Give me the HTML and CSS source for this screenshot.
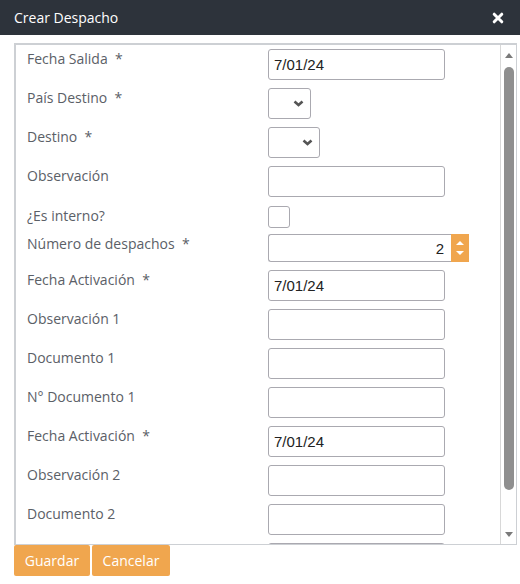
FILE: index.html
```html
<!DOCTYPE html>
<html lang="es">
<head>
<meta charset="utf-8">
<title>Crear Despacho</title>
<link rel="stylesheet" href="styles.css">
</head>
<body>
<header class="dlg-head">
  <span class="dlg-title">Crear Despacho</span>
  <svg class="dlg-close" width="12" height="12" viewBox="0 0 12 12" aria-hidden="true"><path d="M2.2 2.2 L9.8 9.8 M9.8 2.2 L2.2 9.8" stroke="#fff" stroke-width="3" stroke-linecap="round"/></svg>
</header>
<main class="dlg-body">
  <div class="panel">
    <div class="form">
      <div class="row"><label class="lbl">Fecha Salida &nbsp;*</label><input class="txt" type="text" value="7/01/24"></div>
      <div class="row"><label class="lbl">País Destino &nbsp;*</label><div class="sel sel-sm"><svg class="chev" width="11" height="7" viewBox="0 0 11 7"><path d="M1.5 1.5 L5.5 5 L9.5 1.5" fill="none" stroke="#555" stroke-width="2.6"/></svg></div></div>
      <div class="row"><label class="lbl">Destino &nbsp;*</label><div class="sel sel-md"><svg class="chev" width="11" height="7" viewBox="0 0 11 7"><path d="M1.5 1.5 L5.5 5 L9.5 1.5" fill="none" stroke="#555" stroke-width="2.6"/></svg></div></div>
      <div class="row"><label class="lbl">Observación</label><input class="txt" type="text"></div>
      <div class="row row-check"><label class="lbl">¿Es interno?</label><span class="chk"></span></div>
      <div class="row"><label class="lbl">Número de despachos &nbsp;*</label>
        <div class="num"><span class="num-val">2</span><span class="spin"><svg width="10" height="22" viewBox="0 0 10 22"><path d="M1 8 L5 4 L9 8 Z M1 14 L5 18 L9 14 Z" fill="#fff"/></svg></span></div>
      </div>
      <div class="row"><label class="lbl">Fecha Activación &nbsp;*</label><input class="txt" type="text" value="7/01/24"></div>
      <div class="row"><label class="lbl">Observación 1</label><input class="txt" type="text"></div>
      <div class="row"><label class="lbl">Documento 1</label><input class="txt" type="text"></div>
      <div class="row"><label class="lbl">N° Documento 1</label><input class="txt" type="text"></div>
      <div class="row"><label class="lbl">Fecha Activación &nbsp;*</label><input class="txt" type="text" value="7/01/24"></div>
      <div class="row"><label class="lbl">Observación 2</label><input class="txt" type="text"></div>
      <div class="row"><label class="lbl">Documento 2</label><input class="txt" type="text"></div>
      <div class="row"><span class="lbl"></span><input class="txt" type="text" aria-label="N° Documento 2"></div>
    </div>
    <div class="scrollbar">
      <span class="sb-btn"><svg width="8" height="5" viewBox="0 0 8 5"><path d="M0 5 L4 0 L8 5 Z" fill="#7a7a7a"/></svg></span>
      <div class="sb-track"><div class="sb-thumb"></div></div>
      <span class="sb-btn"><svg width="8" height="5" viewBox="0 0 8 5"><path d="M0 0 L4 5 L8 0 Z" fill="#7a7a7a"/></svg></span>
    </div>
  </div>
  <div class="actions">
    <button class="btn btn-save">Guardar</button>
    <button class="btn btn-cancel">Cancelar</button>
  </div>
</main>
</body>
</html>
```
FILE: styles.css
```css
html, body {
  margin: 0;
  padding: 0;
  background: #fff;
}
body {
  font-family: "Open Sans", "Noto Sans", sans-serif;
  font-size: 14px;
  width: 520px;
  height: 584px;
  overflow: hidden;
}
.dlg-head {
  height: 35px;
  background: #2d333b;
  display: flex;
  align-items: center;
  justify-content: space-between;
  padding: 0 16px 0 14px;
}
.dlg-title {
  color: #fff;
  font-size: 14px;
  line-height: 19px;
}
.dlg-close {
  display: block;
}
.dlg-body {
  padding: 8px 3px 0 14px;
}
.panel {
  height: 502px;
  box-sizing: border-box;
  border: 2px solid #cdd0d4;
  border-right-width: 1px;
  border-bottom-width: 1px;
  display: flex;
  overflow: hidden;
}
.form {
  flex: 1;
  overflow: hidden;
  padding: 4px 0 0 11px;
}
.row {
  display: flex;
  align-items: flex-start;
  margin-bottom: 8px;
}
.lbl {
  width: 241px;
  flex: none;
  color: #5b6067;
  font-size: 14px;
  line-height: 19px;
}
.txt {
  box-sizing: border-box;
  width: 177px;
  height: 31px;
  margin: 0;
  border: 1px solid #aaa9b0;
  border-radius: 3px;
  padding: 0 5px;
  font-family: "Liberation Sans", Arial, sans-serif;
  font-size: 15px;
  color: #222;
  background: #fff;
  outline: none;
}
.sel {
  box-sizing: border-box;
  height: 31px;
  border: 1px solid #aaa9b0;
  border-radius: 3px;
  display: flex;
  align-items: center;
  justify-content: flex-end;
  padding-right: 6px;
}
.sel-sm { width: 43px; }
.sel-md { width: 52px; }
.chev { display: block; }
.row-check {
  padding-top: 1px;
  margin-bottom: 6px;
}
.chk {
  box-sizing: border-box;
  width: 22px;
  height: 22px;
  border: 1px solid #aaa9b0;
  border-radius: 3px;
}
.num {
  display: flex;
  height: 28px;
}
.num-val {
  box-sizing: border-box;
  width: 183px;
  height: 28px;
  border: 1px solid #aaa9b0;
  border-right: none;
  border-radius: 3px 0 0 3px;
  display: flex;
  align-items: center;
  justify-content: flex-end;
  padding-right: 7px;
  font-family: "Liberation Sans", Arial, sans-serif;
  font-size: 15px;
  color: #222;
}
.spin {
  width: 18px;
  height: 28px;
  background: #f0a64e;
  display: flex;
  align-items: center;
  justify-content: center;
}
.spin svg { display: block; }
.scrollbar {
  width: 15px;
  flex: none;
  border-left: 1px solid #d8d8d8;
  display: flex;
  flex-direction: column;
}
.sb-btn {
  height: 20px;
  display: flex;
  align-items: center;
  justify-content: center;
  flex: none;
}
.sb-btn svg { display: block; }
.sb-track {
  flex: 1;
  padding-top: 2px;
  display: flex;
  justify-content: center;
}
.sb-thumb {
  width: 10px;
  height: 423px;
  background: #8f8f8f;
  border-radius: 5px;
}
.actions {
  display: flex;
  gap: 2px;
}
.btn {
  height: 31px;
  border: none;
  border-radius: 2px;
  background: #f0a64e;
  color: #fff;
  font-family: "Open Sans", "Noto Sans", sans-serif;
  font-size: 14px;
  line-height: 19px;
  white-space: nowrap;
  padding: 0;
  margin: 0;
  text-align: center;
}
.btn-save { width: 76px; }
.btn-cancel { width: 78px; }
```
